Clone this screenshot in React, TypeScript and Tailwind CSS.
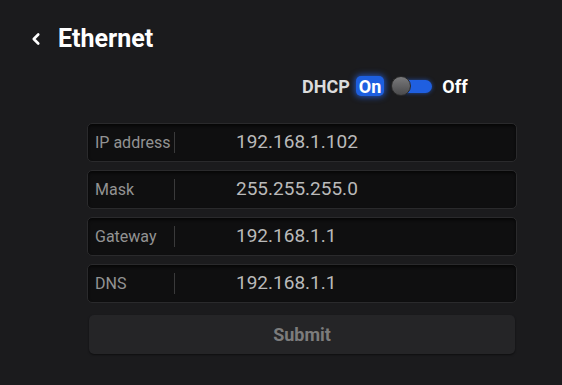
import { ChevronLeft } from "lucide-react";

const rows = [
  { label: "IP address", value: "192.168.1.102" },
  { label: "Mask", value: "255.255.255.0" },
  { label: "Gateway", value: "192.168.1.1" },
  { label: "DNS", value: "192.168.1.1" },
];

export default function App() {
  return (
    <div
      className="w-[562px] h-[385px] overflow-hidden bg-[#1b1b1d] text-white"
      style={{ fontFamily: "Roboto, 'Noto Sans', sans-serif" }}
    >
      <div className="flex items-center h-[30px] mt-[24px] pl-[27px]">
        <ChevronLeft className="w-[18px] h-[18px] text-white" strokeWidth={3.5} />
        <span className="ml-[13px] text-[25px] font-bold leading-[30px]">Ethernet</span>
      </div>

      <div className="flex items-center h-[24px] mt-[20px] ml-[302px]">
        <span className="text-[18px] font-bold text-[#dcdcdc]">DHCP</span>
        <span className="ml-[6px] px-[3px] h-[20px] flex items-center rounded-[5px] bg-[#1d5fe0] text-[18px] font-bold text-white shadow-[0_0_6px_1px_rgba(40,110,255,0.7)]">
          On
        </span>
        <div className="relative ml-[7px] w-[41px] h-[20px] flex items-center">
          <div className="absolute left-[10px] right-0 h-[13px] rounded-full bg-[#1f5fe0] shadow-[0_0_4px_rgba(40,110,255,0.6)]" />
          <div className="absolute left-0 w-[20px] h-[20px] rounded-full bg-gradient-to-b from-[#7a7a7c] to-[#4a4a4c] border border-[#2a2a2a]" />
        </div>
        <span className="ml-[10px] text-[18px] font-bold text-white">Off</span>
      </div>

      <div className="w-[430px] ml-[87px] mt-[25px] flex flex-col gap-[8px]">
        {rows.map((r) => (
          <div
            key={r.label}
            className="h-[39px] flex items-center rounded-[5px] bg-[#0f0f10] border border-[#2a2a2c] shadow-[inset_0_2px_3px_rgba(0,0,0,0.6)]"
          >
            <span className="w-[86px] pl-[7px] text-[16px] text-[#939393]">{r.label}</span>
            <div className="w-px h-[21px] bg-[#3a3a3b]" />
            <span className="ml-[61px] text-[19px] text-[#bababa]">{r.value}</span>
          </div>
        ))}
      </div>

      <div className="w-[426px] ml-[89px] mt-[12px] h-[39px] rounded-[5px] bg-[#252527] flex items-center justify-center shadow-[0_1px_2px_rgba(0,0,0,0.5)]">
        <span className="text-[18px] font-bold text-[#7c7c7c]">Submit</span>
      </div>
    </div>
  );
}
